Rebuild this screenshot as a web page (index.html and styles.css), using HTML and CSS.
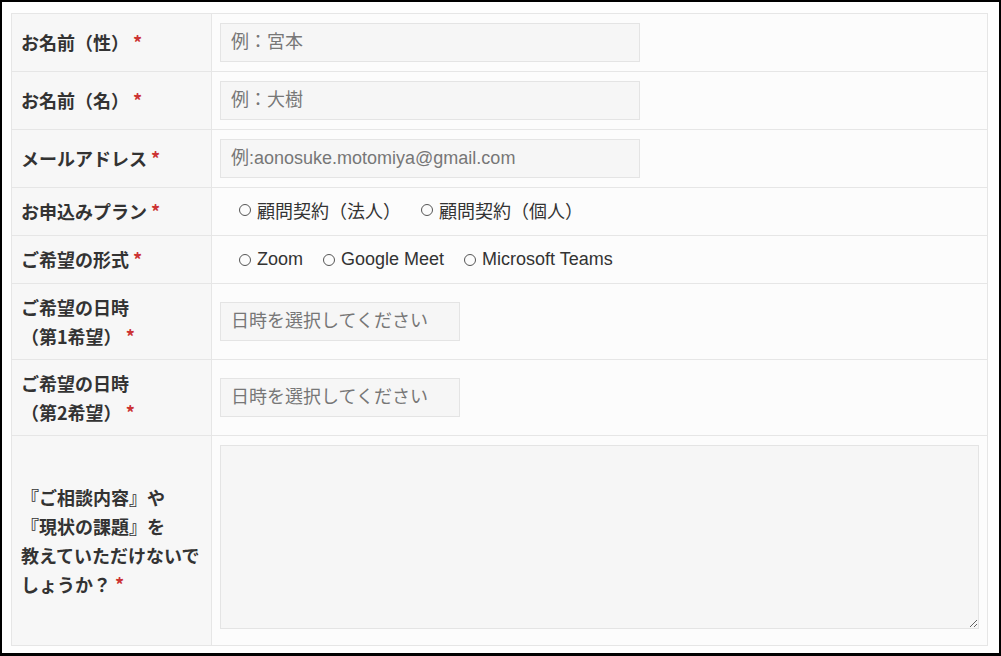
FILE: index.html
```html
<!DOCTYPE html>
<html lang="ja">
<head>
<meta charset="utf-8">
<link rel="stylesheet" href="styles.css">
</head>
<body>
<div class="frame">
  <table class="form">
    <colgroup><col class="c-label"><col class="c-field"></colgroup>
    <tr class="r-text">
      <th>お名前（性） <span class="req">*</span></th>
      <td><input class="inp inp-wide" type="text" placeholder="例：宮本"></td>
    </tr>
    <tr class="r-text">
      <th>お名前（名） <span class="req">*</span></th>
      <td><input class="inp inp-wide" type="text" placeholder="例：大樹"></td>
    </tr>
    <tr class="r-text">
      <th>メールアドレス <span class="req">*</span></th>
      <td><input class="inp inp-wide" type="text" placeholder="例:aonosuke.motomiya@gmail.com"></td>
    </tr>
    <tr class="r-radio">
      <th>お申込みプラン <span class="req">*</span></th>
      <td>
        <div class="radios radios-jp">
          <label class="radio"><span class="dot"></span>顧問契約（法人）</label>
          <label class="radio"><span class="dot"></span>顧問契約（個人）</label>
        </div>
      </td>
    </tr>
    <tr class="r-radio">
      <th>ご希望の形式 <span class="req">*</span></th>
      <td>
        <div class="radios">
          <label class="radio"><span class="dot"></span>Zoom</label>
          <label class="radio"><span class="dot"></span>Google Meet</label>
          <label class="radio"><span class="dot"></span>Microsoft Teams</label>
        </div>
      </td>
    </tr>
    <tr class="r-date">
      <th>ご希望の日時<br>（第1希望） <span class="req">*</span></th>
      <td><input class="inp inp-date" type="text" placeholder="日時を選択してください"></td>
    </tr>
    <tr class="r-date">
      <th>ご希望の日時<br>（第2希望） <span class="req">*</span></th>
      <td><input class="inp inp-date" type="text" placeholder="日時を選択してください"></td>
    </tr>
    <tr class="r-area">
      <th><span class="line">『ご相談内容』や</span><span class="line">『現状の課題』を</span><span class="line">教えていただけないで</span><span class="line">しょうか？ <span class="req">*</span></span></th>
      <td><textarea class="area"></textarea></td>
    </tr>
  </table>
</div>
</body>
</html>
```
FILE: styles.css
```css
html, body {
  margin: 0;
  padding: 0;
  background: #fff;
}

.frame {
  width: 1001px;
  height: 656px;
  box-sizing: border-box;
  border: 2px solid #000;
  border-bottom-width: 3px;
  padding: 11px 11px 0 9px;
  background: #fefefe;
}

.form {
  width: 977px;
  table-layout: fixed;
  border-collapse: collapse;
  border: 1px solid #e6e6e6;
  font-family: "Noto Sans CJK JP", sans-serif;
}

.c-label { width: 200px; }

.form th,
.form td {
  border: 1px solid #e6e6e6;
  vertical-align: middle;
}

.form th {
  background: #f7f7f7;
  color: #333;
  font-size: 18px;
  font-weight: bold;
  text-align: left;
  line-height: 29px;
  padding: 0 8px 0 9px;
}

.line {
  display: block;
  white-space: nowrap;
}

.form td {
  background: #fcfcfc;
  padding: 0 8px 0 8px;
}

.r-text { height: 58px; }
.r-radio { height: 48px; }
.r-date { height: 76px; }
.r-area { height: 210px; }

.req {
  color: #cc3333;
  font-weight: bold;
}

.inp {
  display: block;
  box-sizing: border-box;
  height: 39px;
  margin: 0;
  padding: 0 10px;
  border: 1px solid #e4e4e4;
  background: #f6f6f6;
  font-family: "Liberation Sans", "Noto Sans CJK JP", sans-serif;
  font-size: 18px;
  color: #333;
  outline: none;
}

.inp::placeholder {
  color: #777;
}

.inp-wide { width: 420px; }
.inp-date { width: 240px; }

.radios {
  display: flex;
  align-items: center;
  gap: 20px;
  padding-left: 19px;
  font-family: "Liberation Sans", "Noto Sans CJK JP", sans-serif;
  font-size: 18px;
  color: #333;
}

.radios-jp {
  padding-bottom: 4px;
}

.radio {
  display: flex;
  align-items: center;
}

.dot {
  display: inline-block;
  box-sizing: border-box;
  width: 12px;
  height: 12px;
  border: 1px solid #555;
  border-radius: 50%;
  margin-right: 6px;
}

.area {
  display: block;
  box-sizing: border-box;
  width: 759px;
  height: 184px;
  margin: 0 0 8px 0;
  border: 1px solid #e4e4e4;
  background: #f6f6f6;
  resize: both;
  outline: none;
}
```
